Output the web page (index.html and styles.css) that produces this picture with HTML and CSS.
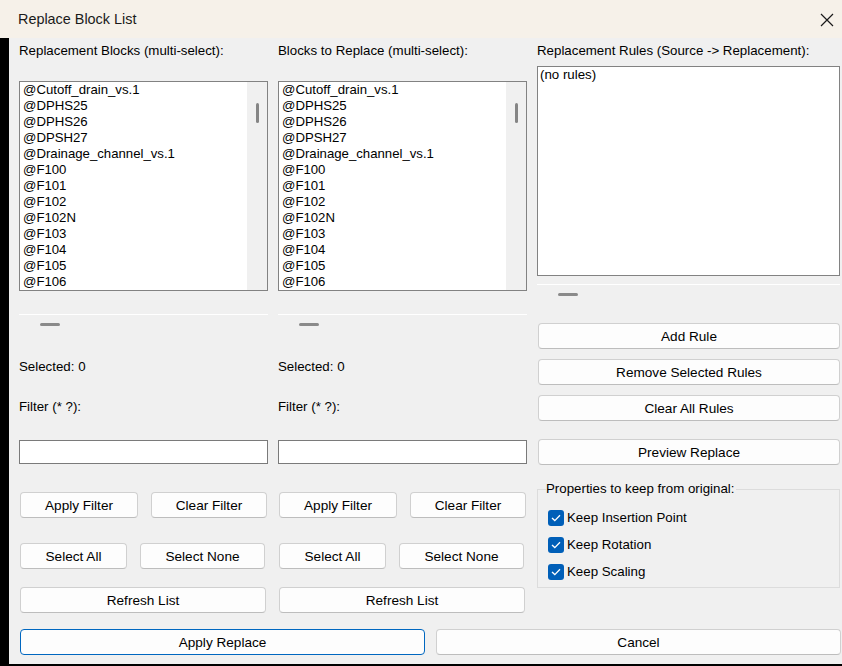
FILE: index.html
```html
<!DOCTYPE html>
<html lang="en">
<head>
    <meta charset="UTF-8">
    <meta name="viewport" content="width=device-width, initial-scale=1.0">
    <title>Replace Block List</title>
    <link rel="stylesheet" href="styles.css">
</head>
<body>
    <div class="window">
        <div class="titlebar">
            <span class="title">Replace Block List</span>
            <svg class="close" width="14" height="14" viewBox="0 0 14 14">
                <path d="M1 1 L13 13 M13 1 L1 13" stroke="#1a1a1a" stroke-width="1.2" fill="none"/>
            </svg>
        </div>

        <div class="client">
            <div class="columns">
                <!-- Replacement blocks -->
                <div class="column">
                    <div class="label head">Replacement Blocks (multi-select):</div>
                    <div class="listbox">
                        <ul class="items">
                            <li>@Cutoff_drain_vs.1</li>
                            <li>@DPHS25</li>
                            <li>@DPHS26</li>
                            <li>@DPSH27</li>
                            <li>@Drainage_channel_vs.1</li>
                            <li>@F100</li>
                            <li>@F101</li>
                            <li>@F102</li>
                            <li>@F102N</li>
                            <li>@F103</li>
                            <li>@F104</li>
                            <li>@F105</li>
                            <li>@F106</li>
                        </ul>
                        <div class="scrollbar"><div class="thumb"></div></div>
                    </div>
                    <div class="sash"></div>
                    <div class="grip"></div>
                    <div class="label selected">Selected: 0</div>
                    <div class="label filter">Filter (* ?):</div>
                    <input class="entry" type="text">
                    <div class="row row-filter">
                        <button class="btn w-apply">Apply Filter</button>
                        <button class="btn w-clear">Clear Filter</button>
                    </div>
                    <div class="row row-select">
                        <button class="btn w-all">Select All</button>
                        <button class="btn w-none">Select None</button>
                    </div>
                    <div class="row row-refresh">
                        <button class="btn w-full">Refresh List</button>
                    </div>
                </div>

                <!-- Blocks to replace -->
                <div class="column">
                    <div class="label head">Blocks to Replace (multi-select):</div>
                    <div class="listbox">
                        <ul class="items">
                            <li>@Cutoff_drain_vs.1</li>
                            <li>@DPHS25</li>
                            <li>@DPHS26</li>
                            <li>@DPSH27</li>
                            <li>@Drainage_channel_vs.1</li>
                            <li>@F100</li>
                            <li>@F101</li>
                            <li>@F102</li>
                            <li>@F102N</li>
                            <li>@F103</li>
                            <li>@F104</li>
                            <li>@F105</li>
                            <li>@F106</li>
                        </ul>
                        <div class="scrollbar"><div class="thumb"></div></div>
                    </div>
                    <div class="sash"></div>
                    <div class="grip"></div>
                    <div class="label selected">Selected: 0</div>
                    <div class="label filter">Filter (* ?):</div>
                    <input class="entry" type="text">
                    <div class="row row-filter">
                        <button class="btn w-apply">Apply Filter</button>
                        <button class="btn w-clear">Clear Filter</button>
                    </div>
                    <div class="row row-select">
                        <button class="btn w-all">Select All</button>
                        <button class="btn w-none">Select None</button>
                    </div>
                    <div class="row row-refresh">
                        <button class="btn w-full">Refresh List</button>
                    </div>
                </div>

                <!-- Rules -->
                <div class="column">
                    <div class="label head">Replacement Rules (Source -&gt; Replacement):</div>
                    <div class="rules">(no rules)</div>
                    <div class="sash sash-rules"></div>
                    <div class="grip"></div>
                    <button class="btn rule-btn first">Add Rule</button>
                    <button class="btn rule-btn">Remove Selected Rules</button>
                    <button class="btn rule-btn">Clear All Rules</button>
                    <button class="btn rule-btn preview">Preview Replace</button>
                    <fieldset class="group">
                        <legend>Properties to keep from original:</legend>
                        <div class="check first"><span class="box"><svg width="10" height="8" viewBox="0 0 10 8"><path d="M1 4 L3.8 6.6 L9 1.2" stroke="#fff" stroke-width="1.3" fill="none"/></svg></span>Keep Insertion Point</div>
                        <div class="check"><span class="box"><svg width="10" height="8" viewBox="0 0 10 8"><path d="M1 4 L3.8 6.6 L9 1.2" stroke="#fff" stroke-width="1.3" fill="none"/></svg></span>Keep Rotation</div>
                        <div class="check"><span class="box"><svg width="10" height="8" viewBox="0 0 10 8"><path d="M1 4 L3.8 6.6 L9 1.2" stroke="#fff" stroke-width="1.3" fill="none"/></svg></span>Keep Scaling</div>
                    </fieldset>
                </div>
            </div>

            <div class="footer">
                <button class="btn default">Apply Replace</button>
                <button class="btn">Cancel</button>
            </div>
        </div>
    </div>
</body>
</html>
```

FILE: styles.css
```css
* {
    box-sizing: border-box;
}
body {
    margin: 0;
    font-family: "Liberation Sans", Arial, sans-serif;
    font-size: 13.3px;
    color: #000;
    background-color: #f0f0f0;
}
.window {
    width: 842px;
    height: 666px;
    overflow: hidden;
}
.titlebar {
    height: 38px;
    background-color: #f6f1e9;
    display: flex;
    align-items: center;
    justify-content: space-between;
    padding: 0 8px 0 18px;
}
.title {
    font-size: 14.4px;
    color: #1a1a1a;
}
.close {
    margin-top: 1px;
}
.client {
    height: 628px;
    background-color: #f0f0f0;
    border-left: 9px solid #000;
    border-bottom: 2px solid #000;
    padding: 0 2px 0 10px;
}
.columns {
    display: grid;
    grid-template-columns: 249px 249px 303px;
    column-gap: 10px;
    align-items: start;
}
.column {
    display: flex;
    flex-direction: column;
}
.label {
    height: 16px;
    line-height: 16px;
    white-space: nowrap;
}
.head {
    margin-top: 5px;
}
.listbox {
    margin-top: 22px;
    height: 210px;
    background-color: #fff;
    border: 1px solid #828282;
    display: flex;
    overflow: hidden;
}
.items {
    list-style: none;
    margin: 0;
    padding: 0 0 0 3px;
    flex: 1;
    font-size: 13.2px;
    line-height: 16px;
    white-space: nowrap;
    overflow: hidden;
}
.scrollbar {
    width: 20px;
    background-color: #f0f0f0;
    display: flex;
    justify-content: center;
}
.thumb {
    width: 3px;
    height: 20px;
    margin-top: 21px;
    margin-left: 1px;
    border-radius: 2px;
    background-color: #858585;
}
.sash {
    margin-top: 23px;
    height: 1px;
    background-color: #fff;
}
.grip {
    margin-top: 8px;
    margin-left: 21px;
    width: 20px;
    height: 3px;
    border-radius: 2px;
    background-color: #8a8a8a;
}
.selected {
    margin-top: 33px;
}
.filter {
    margin-top: 24px;
}
.entry {
    margin: 25px 0 0 0;
    height: 24px;
    width: 249px;
    border: 1px solid #7a7a7a;
    background-color: #fff;
    outline: none;
}
.row {
    display: flex;
    padding-left: 1px;
}
.row-filter {
    margin-top: 28px;
    gap: 13px;
}
.row-select {
    margin-top: 25px;
    gap: 13px;
}
.row-refresh {
    margin-top: 18px;
}
.btn {
    height: 26px;
    font-family: "Liberation Sans", Arial, sans-serif;
    font-size: 13.6px;
    color: #000;
    background-color: #fdfdfd;
    border: 1px solid #d0d0d0;
    border-bottom-color: #bdbdbd;
    border-radius: 4px;
    padding: 0;
}
.w-apply { width: 118px; }
.w-clear { width: 116px; }
.w-all { width: 107px; }
.w-none { width: 125px; }
.w-full { width: 246px; }
.rules {
    margin-top: 7px;
    height: 210px;
    background-color: #fff;
    border: 1px solid #828282;
    padding-left: 2px;
    line-height: 16px;
}
.sash-rules {
    margin-top: 8px;
}
.rule-btn {
    margin-top: 10px;
    margin-left: 1px;
    width: 302px;
}
.rule-btn.first {
    margin-top: 27px;
}
.rule-btn.preview {
    margin-top: 18px;
}
.group {
    margin: 16px 0 0 0;
    padding: 7px 0 2px 8px;
    border: 1px solid #dcdcdc;
    min-width: 0;
}
.group legend {
    padding: 0 2px 0 0;
    height: 16px;
    line-height: 16px;
}
.check {
    height: 27px;
    display: flex;
    align-items: center;
    gap: 3px;
    margin-left: 2px;
}
.box {
    width: 16px;
    height: 16px;
    border-radius: 3px;
    background-color: #005fb8;
    display: flex;
    align-items: center;
    justify-content: center;
}
.footer {
    margin-top: 16px;
    display: grid;
    grid-template-columns: 405px 405px;
    column-gap: 11px;
    padding-left: 1px;
}
.default {
    border: 1px solid #0067c0;
}
```
